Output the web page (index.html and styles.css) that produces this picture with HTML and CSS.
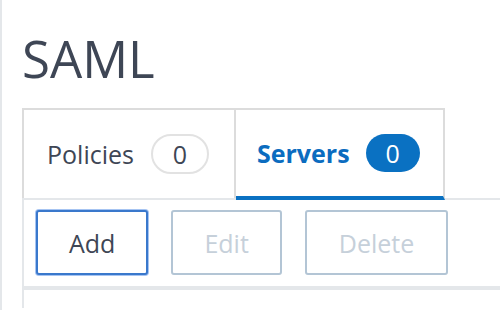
FILE: index.html
```html
<!DOCTYPE html>
<html lang="en">
<head>
    <meta charset="UTF-8">
    <title>SAML</title>
    <link rel="stylesheet" href="styles.css">
</head>
<body>
<div class="page">
    <h1 class="page-title">SAML</h1>

    <!-- Tabs -->
    <div class="tabs">
        <div class="tab">Policies <span class="badge">0</span></div>
        <div class="tab active">Servers <span class="badge">0</span></div>
    </div>

    <!-- Toolbar -->
    <div class="toolbar">
        <button class="btn btn-focus">Add</button>
        <button class="btn" disabled>Edit</button>
        <button class="btn" disabled>Delete</button>
    </div>

    <div class="table-area"></div>
</div>
</body>
</html>
```

FILE: styles.css
```css
html, body { margin: 0; padding: 0; background: #fff; height: 100%; overflow: hidden; }
body { font-family: "Open Sans", "DejaVu Sans", sans-serif; color: #3e4655; }
.page { border-left: 2px solid #e4e7ea; padding-left: 20px; height: 100%; box-sizing: border-box; }
.page-title { font-size: 51px; font-weight: normal; line-height: 60px; margin: 0; padding-top: 28px; padding-bottom: 20px; }
.tabs { display: flex; border-bottom: 2px solid #e4e7ea; }
.tab { display: flex; align-items: center; gap: 17px; height: 88px; padding: 0 25px 0 23px; border-top: 2px solid #dcdcdc; border-right: 2px solid #dcdcdc; font-size: 25px; }
.tab:first-child { border-left: 2px solid #dcdcdc; }
.tab.active { color: #0b6cbf; font-weight: bold; height: 86px; border-bottom: 4px solid #0a71c2; margin-bottom: -2px; padding: 0 23px 0 21px; gap: 16px; }
.badge { display: inline-flex; align-items: center; justify-content: center; box-sizing: border-box; min-width: 58px; height: 40px; border: 2px solid #e2e2e2; border-radius: 20px; font-weight: normal; color: #3e4655; }
.tab.active .badge { min-width: 54px; height: 38px; border: none; background: #0a71c2; color: #fff; font-weight: normal; }
.toolbar { display: flex; gap: 23px; border-left: 2px solid #e4e7ea; border-bottom: 4px solid #e4e7ea; padding: 10px 11px 11px; }
.btn { font-family: inherit; font-size: 25px; height: 65px; padding: 0 31px; background: #fff; border: 2px solid #b3c5d5; border-radius: 3px; color: #c6d0da; }
.btn-focus { border-color: #3a78cc; color: #3e4655; box-shadow: 0 0 0 1px #a6c4f2; margin-left: 1px; }
.btn:last-child { padding: 0 32px; }
.table-area { border-left: 2px solid #e4e7ea; height: 18px; }
```
